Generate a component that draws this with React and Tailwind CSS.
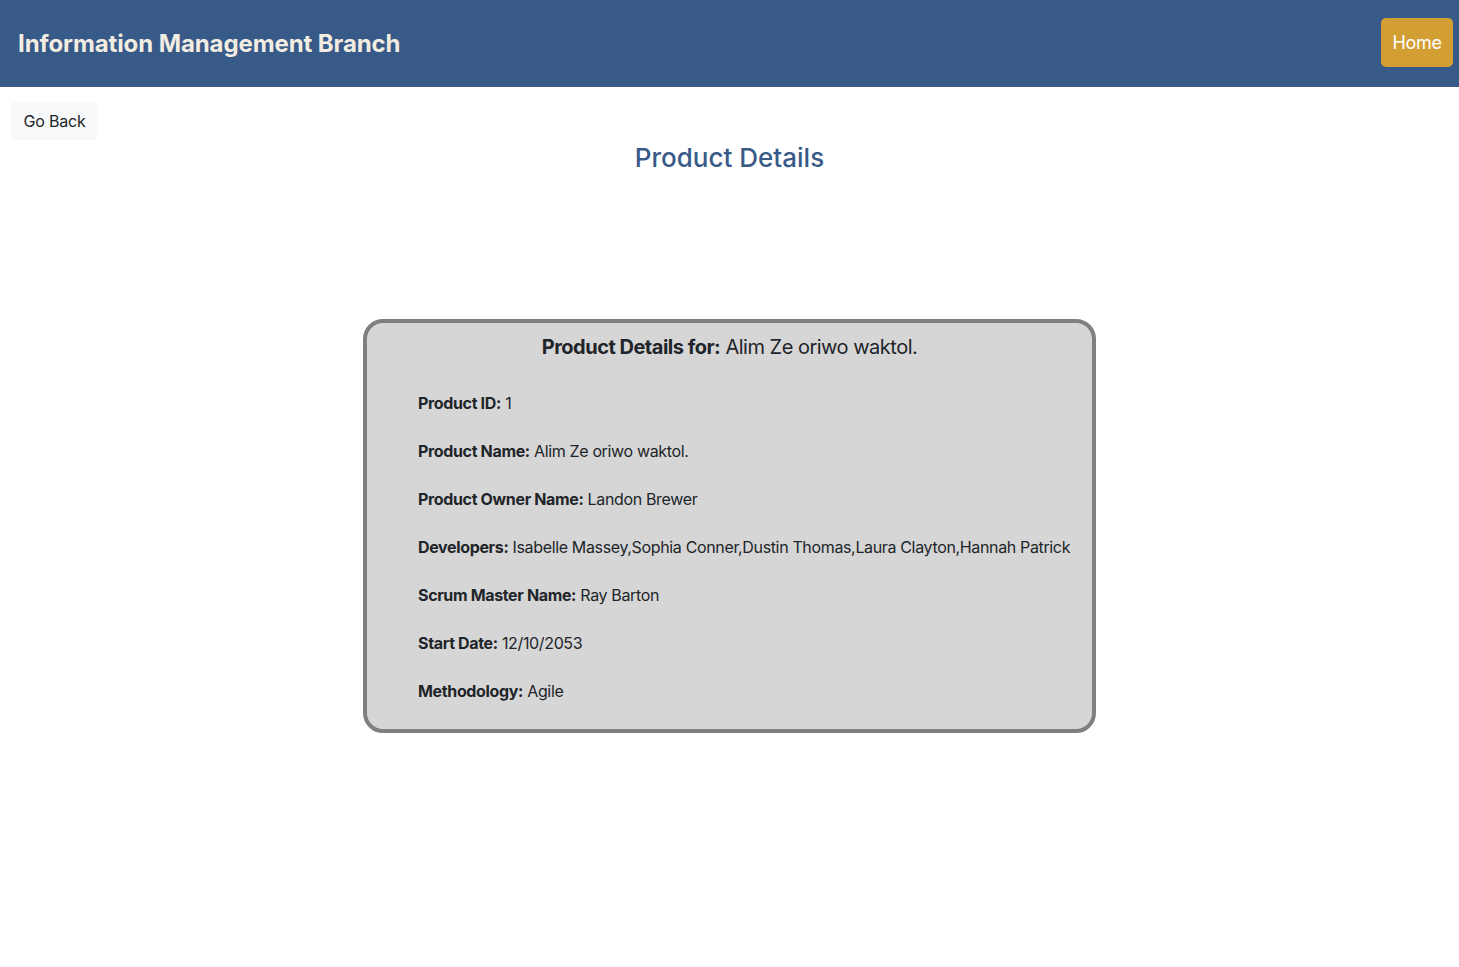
import React from "react";

const rows = [
  ["Product ID:", "1"],
  ["Product Name:", "Alim Ze oriwo waktol."],
  ["Product Owner Name:", "Landon Brewer"],
  ["Developers:", "Isabelle Massey,Sophia Conner,Dustin Thomas,Laura Clayton,Hannah Patrick"],
  ["Scrum Master Name:", "Ray Barton"],
  ["Start Date:", "12/10/2053"],
  ["Methodology:", "Agile"],
];

export default function App() {
  return (
    <div className="min-h-[967px] bg-white text-[#212529]" style={{ fontFamily: "Inter, 'Noto Sans', sans-serif" }}>
      <header className="h-[87px] bg-[#385a88] flex items-start justify-between pl-[18px] pr-[6px]">
        <h1 className="mt-[29px] text-[24px] leading-[30px] font-bold text-[#f2ece1] tracking-[-0.1px]">Information Management Branch</h1>
        <button className="mt-[18px] h-[49px] w-[72px] rounded-[5px] bg-[#d39e34] text-white text-[18px] tracking-[-0.3px]">Home</button>
      </header>
      <div className="pl-[11px] pt-[15px]">
        <button className="h-[38px] w-[87px] rounded-[4px] bg-[#f8f9fa] text-[16px] text-[#212529] tracking-[-0.2px]">Go Back</button>
      </div>
      <h2 className="text-center text-[26px] leading-[36px] font-medium text-[#385a88]">Product Details</h2>
      <div className="flex justify-center mt-[143px]">
        <div className="w-[733px] h-[414px] border-4 border-[#808080] rounded-[20px] bg-[#d6d6d6] pt-[9px]">
          <div className="text-center text-[20px] leading-[30px] tracking-[-0.5px]">
            <span className="font-bold">Product Details for:</span> Alim Ze oriwo waktol.
          </div>
          <div className="flex flex-col gap-6 pl-[51px] mt-[29px] text-[16px] leading-[24px] tracking-[-0.35px]">
            {rows.map(([k, v]) => (
              <div key={k} className="whitespace-nowrap">
                <span className="font-bold">{k}</span> {v}
              </div>
            ))}
          </div>
        </div>
      </div>
    </div>
  );
}
